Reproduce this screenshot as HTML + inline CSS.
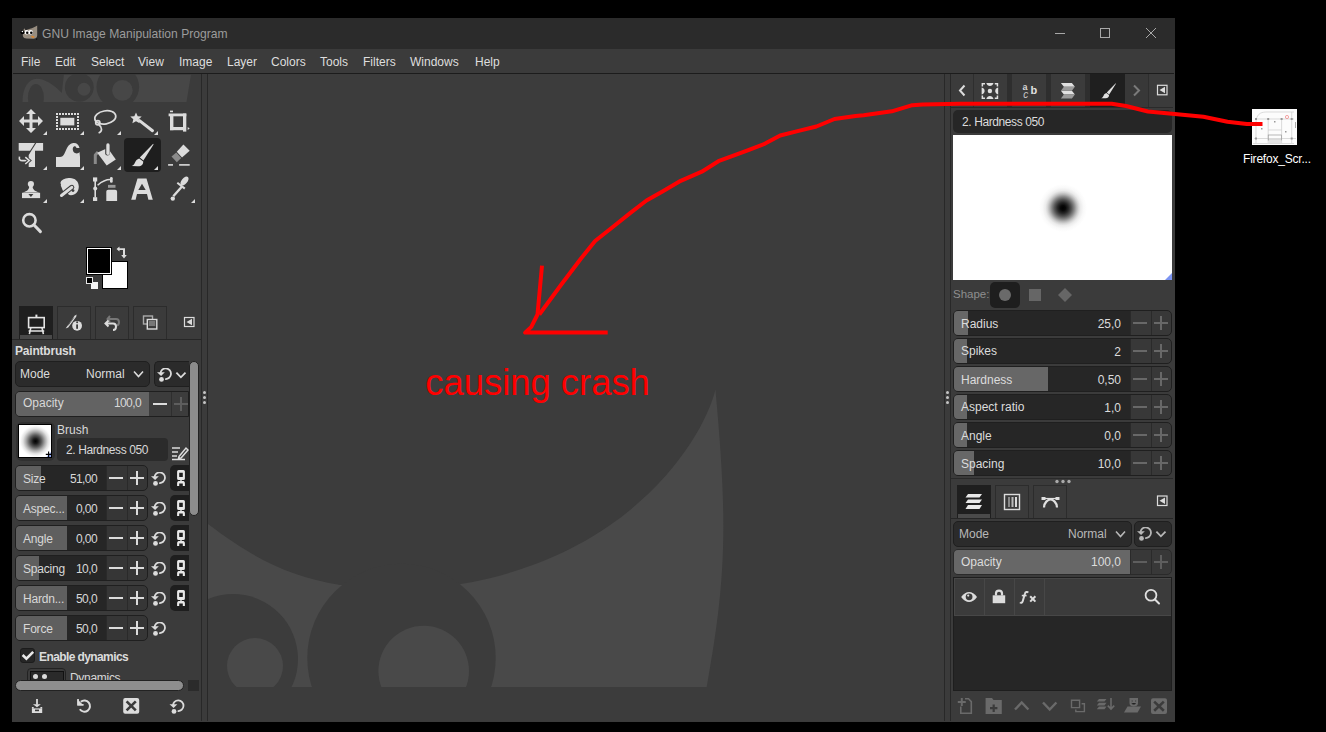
<!DOCTYPE html>
<html><head><meta charset="utf-8">
<style>
html,body{margin:0;padding:0;}
body{width:1326px;height:732px;background:#000;position:relative;overflow:hidden;font-family:"Liberation Sans",sans-serif;}
.a{position:absolute;box-sizing:border-box;}
.t{position:absolute;white-space:nowrap;line-height:1;font-family:"Liberation Sans",sans-serif;}
.m{font-size:12px;color:#dedede;top:56px;}
.lbl{font-size:12px;color:#d8d8d8;}
</style></head><body>
<!-- window base -->
<div class="a" style="left:12px;top:18px;width:1163px;height:704px;background:#3b3b3b;"></div>
<!-- title bar -->
<div class="a" style="left:12px;top:18px;width:1163px;height:31px;background:#2b2b2b;"></div>
<div class="t" style="left:42px;top:28px;font-size:12.1px;color:#9c9c9c;">GNU Image Manipulation Program</div>
<!-- menu bar -->
<div class="a" style="left:12px;top:49px;width:1163px;height:24px;background:#3b3b3b;"></div>

<div class="t m" style="left:21px;">File</div>
<div class="t m" style="left:55px;">Edit</div>
<div class="t m" style="left:91px;">Select</div>
<div class="t m" style="left:138px;">View</div>
<div class="t m" style="left:179px;">Image</div>
<div class="t m" style="left:227px;">Layer</div>
<div class="t m" style="left:271px;">Colors</div>
<div class="t m" style="left:320px;">Tools</div>
<div class="t m" style="left:363px;">Filters</div>
<div class="t m" style="left:410px;">Windows</div>
<div class="t m" style="left:475px;">Help</div>

<!-- separators -->
<div class="a" style="left:201px;top:73px;width:1px;height:648px;background:#282828;"></div>
<div class="a" style="left:207px;top:73px;width:1px;height:648px;background:#282828;"></div>
<div class="a" style="left:944px;top:73px;width:1px;height:648px;background:#282828;"></div>
<div class="a" style="left:950px;top:73px;width:1px;height:648px;background:#282828;"></div>

<!-- canvas -->
<div class="a" style="left:208px;top:73px;width:736px;height:648px;background:#3c3c3c;overflow:hidden;">
<svg width="736" height="648" style="position:absolute;left:0;top:0">
  <path fill="#494949" d="M0.0 451.0 C48.0 487.0 80.0 503.0 132.0 512.0 L251.5 511.3 C427.0 482.0 497.0 362.0 507.4 316.6 C520.0 452.0 518.0 507.0 498.7 614.0 L0.0 614.0 Z"/>
  <g fill="#3c3c3c">
    <circle cx="25" cy="586" r="65"/>
    <circle cx="193.5" cy="585" r="94.2"/>
  </g>
  <g fill="#494949">
    <circle cx="47" cy="593" r="28"/>
    <circle cx="215.7" cy="598" r="45.3"/>
  </g>
  <rect x="0" y="614" width="736" height="40" fill="#3c3c3c"/>
</svg>
</div>


<!-- LEFT DOCK -->
<svg class="a" style="left:12px;top:73px" width="189" height="170" viewBox="0 0 189 170">
  <!-- wilber header -->
  <path fill="#474747" d="M10.5 29 C10.5 14 17 5.8 24.7 5.8 C33 5.8 42 12 49.8 20 L51.9 1.4 L179 1.4 L174.5 29 Z"/>
  <g fill="#3b3b3b">
    <ellipse cx="23.9" cy="25" rx="8" ry="14"/>
    <circle cx="67.3" cy="14.3" r="14.4"/>
    <circle cx="105.8" cy="13.9" r="21.3"/>
  </g>
  <g fill="#474747">
    <circle cx="72" cy="16.3" r="6.45"/>
    <circle cx="110.4" cy="17.4" r="10.3"/>
  </g>
  <rect x="0" y="0" width="189" height="1.4" fill="#3b3b3b"/>
  <rect x="0" y="29" width="189" height="141" fill="#3b3b3b"/>
</svg>
<svg class="a" style="left:12px;top:102px" width="189" height="140" viewBox="0 0 189 140">
  <!-- selected tile -->
  <rect x="112" y="36" width="37" height="34" rx="4" fill="#1e1e1e"/>
  <g fill="#dcdcdc">
    <!-- corner triangles row1 -->
    <path d="M31 33 L35 29 L35 33 Z"/><path d="M68 33 L72 29 L72 33 Z"/><path d="M105 33 L109 29 L109 33 Z"/><path d="M142 33 L146 29 L146 33 Z"/>
    <path d="M31 68 L35 64 L35 68 Z"/><path d="M68 68 L72 64 L72 68 Z"/><path d="M105 68 L109 64 L109 68 Z"/><path d="M142 68 L146 64 L146 68 Z"/>
    <path d="M31 101 L35 97 L35 101 Z"/><path d="M68 101 L72 97 L72 101 Z"/><path d="M179 101 L183 97 L183 101 Z"/>
  </g>
  <!-- move -->
  <g fill="#dcdcdc">
    <path d="M19 7 L24 12 L20.5 12 L20.5 17.5 L26 17.5 L26 14 L31 19 L26 24 L26 20.5 L20.5 20.5 L20.5 26 L24 26 L19 31 L14 26 L17.5 26 L17.5 20.5 L12 20.5 L12 24 L7 19 L12 14 L12 17.5 L17.5 17.5 L17.5 12 L14 12 Z"/>
  </g>
  <!-- rect select -->
  <g fill="#dcdcdc">
    <rect x="48.3" y="15.8" width="14" height="7.6"/>
    <path d="M44 11h2v2h-2zM47 11h2v2h-2zM50 11h2v2h-2zM53 11h2v2h-2zM56 11h2v2h-2zM59 11h2v2h-2zM62 11h2v2h-2zM65 11h2v2h-2z
             M44 26h2v2h-2zM47 26h2v2h-2zM50 26h2v2h-2zM53 26h2v2h-2zM56 26h2v2h-2zM59 26h2v2h-2zM62 26h2v2h-2zM65 26h2v2h-2z
             M44 14h2v2h-2zM44 17h2v2h-2zM44 20h2v2h-2zM44 23h2v2h-2zM65 14h2v2h-2zM65 17h2v2h-2zM65 20h2v2h-2zM65 23h2v2h-2z"/>
  </g>
  <!-- lasso -->
  <g fill="none" stroke="#dcdcdc" stroke-width="1.7">
    <ellipse cx="93.3" cy="15.4" rx="10.6" ry="6.5" transform="rotate(-10 93.3 15.4)"/>
    <circle cx="85.8" cy="20.8" r="2.1"/>
    <path d="M86.8 22.8 C90.3 25 90.6 29.6 86.6 31"/>
  </g>
  <!-- magic wand -->
  <g fill="#dcdcdc">
    <path d="M124 10.5 L125.7 14.2 L129.7 14.6 L126.7 17.3 L127.6 21.2 L124 19.2 L120.4 21.2 L121.3 17.3 L118.3 14.6 L122.3 14.2 Z"/>
  </g>
  <path d="M127.5 18.6 L140.5 28.7" stroke="#dcdcdc" stroke-width="3" stroke-linecap="round"/>
  <!-- crop -->
  <g fill="#dcdcdc">
    <rect x="156.6" y="11.5" width="17.7" height="2.8"/>
    <rect x="171" y="11.5" width="3.3" height="18.1"/>
    <rect x="158" y="14" width="3.4" height="14.2"/>
    <rect x="158" y="25" width="13" height="3.2"/>
    <rect x="158" y="8.6" width="3" height="1.6"/>
    <path d="M175.7 24.9 L177.7 26.5 L175.7 28 Z"/>
  </g>
  <!-- unified transform -->
  <path fill="#dcdcdc" d="M6.7 41.1 H31.1 V48.8 H23 V65 H16.7 V52.6 L18.6 48.8 H6.7 Z"/>
  <path d="M23.8 40.8 L16.2 52.8" stroke="#3b3b3b" stroke-width="1.1"/>
  <path d="M7.5 54.6 C6.8 57.5 8 58.6 10.5 58.6 L15.5 58.6" fill="none" stroke="#3b3b3b" stroke-width="3.6"/>
  <path d="M7.5 54.6 C6.8 57.5 8 58.6 10.5 58.6 L15.5 58.6" fill="none" stroke="#dcdcdc" stroke-width="1.6"/>
  <path d="M13.3 55.2 L17.3 58.6 L13.3 62" fill="none" stroke="#3b3b3b" stroke-width="3.4"/>
  <path d="M13.3 55.2 L17.3 58.6 L13.3 62" fill="none" stroke="#dcdcdc" stroke-width="1.6"/>
  <!-- warp -->
  <path fill="#dcdcdc" d="M44 55 L48 55 C52 55 53 50 55 46 C57 42 60 41 62 41 C65 41 67 43 67.5 46 L64.5 46 C64 44.5 63 44 62 44.5 C60 45.5 60.5 50 63 51 C65 52 67 51 67.5 50 L68 55 L68 65 L44 65 Z"/>
  <!-- bucket -->
  <path d="M83.3 62 L83.3 53 L86 50" fill="none" stroke="#8a8a8a" stroke-width="3" stroke-linejoin="round"/>
  <g fill="#dcdcdc">
    <path d="M85.2 50.7 L95.7 46 L103.8 57.4 L94.7 63.6 Z"/>
  </g>
  <rect x="93.2" y="40.6" width="4.6" height="13" rx="2.3" fill="#3b3b3b"/>
  <rect x="94.3" y="41.3" width="3.3" height="11.6" rx="1.6" fill="#dcdcdc"/>
  <!-- paintbrush -->
  <g fill="#dcdcdc">
    <path d="M141.2 41.8 L127.8 55.6 L131.4 58.4 L141.5 42.4 Z"/>
    <path d="M127.2 56.4 L131.2 59.4 C131.4 62.4 129.4 64.4 125.6 64.2 L119.6 64 C121.4 63.4 122.2 62.4 123 60.5 C123.8 58.6 125 57 127.2 56.4 Z"/>
  </g>
  <!-- eraser -->
  <g>
    <path d="M171.4 42.5 L177.7 48.8 L170 55.4 L164.8 49.7 Z" fill="#dcdcdc"/>
    <path d="M164.3 50.6 L169.2 55.9 L164.8 60.2 L159.5 54.5 Z" fill="#8a8a8a"/>
    <rect x="156.1" y="62.1" width="4.9" height="1.6" fill="#dcdcdc"/>
    <rect x="167.1" y="62.1" width="10.6" height="1.6" fill="#dcdcdc"/>
  </g>
  <!-- clone -->
  <g fill="#dcdcdc">
    <circle cx="18.9" cy="82" r="3.1"/>
    <path d="M17.2 84 C17.2 87.2 15.8 89.2 10.5 90.4 L27.6 90.4 C22.2 89.2 20.6 87.2 20.6 84 Z"/>
    <rect x="10" y="90.8" width="18.1" height="5.3"/>
  </g>
  <path d="M16.4 92 L21.4 92 L18.9 95.1 Z" fill="#3b3b3b"/>
  <!-- smudge -->
  <path fill="#dcdcdc" d="M48.6 80.2 C50 77 54 76 58 76 C63 76 66.8 79.5 66.8 84.5 C66.8 89.5 63.5 93.2 59 93.2 C56.6 93.2 55.4 91.8 55.8 90.2 L51.5 89.5 C50.4 88.2 50.2 86.8 49.6 85.5 C49 84.2 48.5 83.3 49 82.3 C48.4 81.6 48.3 80.9 48.6 80.2 Z"/>
  <path d="M49.5 93.5 L59.8 85.3" stroke="#3b3b3b" stroke-width="5" stroke-linecap="round"/>
  <path d="M49.5 93.5 L59.8 85.3" stroke="#dcdcdc" stroke-width="3" stroke-linecap="round"/>
  <circle cx="61" cy="88.6" r="1.4" fill="#3b3b3b"/>
  <!-- paths -->
  <g fill="#dcdcdc">
    <rect x="81" y="75.4" width="4.2" height="4.1"/>
    <rect x="81" y="95.2" width="4.2" height="3.8"/>
    <circle cx="83.2" cy="86.6" r="2"/>
    <rect x="82.4" y="79" width="1.6" height="16.5"/>
    <rect x="98" y="75" width="2.7" height="5.8" rx="1.3"/>
    <path d="M94.3 99 L94.3 89.8 C94.3 88.5 95 87.8 96.3 87.8 L103.1 87.8 C104.4 87.8 105.1 88.5 105.1 89.8 L105.1 99 Z"/>
  </g>
  <path d="M85.6 83.3 C89 80.3 93 77.6 98.3 77.6" fill="none" stroke="#dcdcdc" stroke-width="1.5"/>
  <rect x="96" y="82.9" width="7.5" height="2.9" fill="#9a9a9a"/>
  <!-- text A -->
  <path fill="#dcdcdc" fill-rule="evenodd" d="M125.5 76.6 L134.5 76.6 L140.8 97.8 L136.4 97.8 L135 92 L125 92 L123.6 97.8 L119.2 97.8 Z M130 81.8 L126.3 87.9 L133.7 87.9 Z"/>
  <!-- color picker -->
  <ellipse cx="172.5" cy="79" rx="2.9" ry="5.3" transform="rotate(40 172.5 79)" fill="#dcdcdc"/>
  <path d="M165.3 80.8 L172.8 86.6" stroke="#dcdcdc" stroke-width="2"/>
  <path d="M170 84.5 L161.3 94.2" stroke="#dcdcdc" stroke-width="2.4"/>
  <circle cx="160.8" cy="96.6" r="2.2" fill="#dcdcdc"/>
  <!-- zoom -->
  <g fill="none" stroke="#dcdcdc">
    <circle cx="17.4" cy="118.3" r="6.2" stroke-width="2.6"/>
    <path d="M21.8 122.8 L28.4 129.6" stroke-width="3" stroke-linecap="round"/>
  </g>
</svg>
<!-- FG/BG colors -->
<div class="a" style="left:102px;top:261px;width:26px;height:28px;background:#fff;border:1px solid #000;"></div>
<div class="a" style="left:86px;top:247px;width:26px;height:28px;background:#000;border:1px solid #000;box-shadow:inset 0 0 0 1px #fff;"></div>
<div class="a" style="left:88px;top:249px;width:22px;height:24px;background:#000;"></div>
<div class="a" style="left:91px;top:282px;width:7px;height:7px;background:#f4f4f4;"></div>
<div class="a" style="left:86px;top:277px;width:7px;height:7px;background:#000;border:1px solid #e8e8e8;"></div>
<svg class="a" style="left:115px;top:246px" width="14" height="14" viewBox="0 0 14 14">
  <path d="M1.5 3 L4.5 0.5 L4.5 2.2 L10 2.2 L10 9 L11.8 9 L9 12.5 L6.2 9 L8 9 L8 4 L4.5 4 L4.5 5.6 Z" fill="#dcdcdc"/>
</svg>
<!-- dock tabs -->
<div class="a" style="left:12px;top:339px;width:189px;height:1px;background:#262626;"></div>
<div class="a" style="left:19px;top:306px;width:34px;height:33px;background:#1f1f1f;"></div>
<div class="a" style="left:20px;top:335px;width:32px;height:4px;background:#4a4a4a;"></div>
<div class="a" style="left:57px;top:306px;width:34px;height:33px;border:1px solid #2c2c2c;border-bottom:none;"></div>
<div class="a" style="left:95px;top:306px;width:34px;height:33px;border:1px solid #2c2c2c;border-bottom:none;"></div>
<div class="a" style="left:133px;top:306px;width:34px;height:33px;border:1px solid #2c2c2c;border-bottom:none;"></div>
<svg class="a" style="left:12px;top:306px" width="189" height="34" viewBox="0 0 189 34">
  <!-- easel -->
  <g fill="none" stroke="#e4e4e4" stroke-width="1.6">
    <rect x="16.6" y="11.6" width="15.6" height="10"/>
    <path d="M16.6 25 L32.2 25 M18.8 21.6 L17.4 28.2 M30 21.6 L31.4 28.2"/>
  </g>
  <rect x="23.4" y="8.6" width="2" height="3" fill="#e4e4e4"/>
  <!-- brush+info -->
  <path d="M53.6 22.6 L62.6 9.8 L64.6 8.6 L64.2 10.8 L56.2 21.4 Z" fill="#dcdcdc"/>
  <path d="M56 19.5 L61.8 11.5" stroke="#3b3b3b" stroke-width="0.7"/>
  <circle cx="65.1" cy="19.8" r="5.6" fill="#3b3b3b"/>
  <circle cx="65.1" cy="19.8" r="4.9" fill="#dcdcdc"/>
  <rect x="64.2" y="18.4" width="1.8" height="4.4" fill="#3b3b3b"/>
  <circle cx="65.1" cy="16.3" r="1" fill="#3b3b3b"/>
  <!-- undo history -->
  <path d="M104 19.5 C108 19.5 108 13 104 13 L97 13" fill="none" stroke="#777" stroke-width="2"/>
  <path d="M98 10 L95.5 13 L98 16" fill="none" stroke="#777" stroke-width="2"/>
  <path d="M101 17.5 L94 17.5 M96.5 14.5 L93.5 17.5 L96.5 20.5 M94 17.5 L101 17.5 C105 17.5 105 24 101 24" fill="none" stroke="#dcdcdc" stroke-width="2"/>
  <!-- images -->
  <rect x="131.5" y="10" width="9" height="8" fill="none" stroke="#aaa" stroke-width="1.4"/>
  <rect x="135.3" y="13.5" width="9.5" height="9.5" fill="#3b3b3b" stroke="#dcdcdc" stroke-width="1.4"/>
  <rect x="136.8" y="15" width="6.5" height="5" fill="#777"/>
  <!-- collapse -->
  <rect x="172.5" y="11.5" width="9.5" height="9" fill="none" stroke="#dcdcdc" stroke-width="1.2"/>
  <path d="M174.5 16 L180 12.8 L180 19.2 Z" fill="#dcdcdc"/>
</svg>
<div class="t" style="left:15px;top:345px;font-size:12px;font-weight:bold;color:#dcdcdc;letter-spacing:-0.2px;">Paintbrush</div>


<!-- tool options controls -->
<div class="a" style="left:15px;top:361px;width:135px;height:26px;background:#2b2b2b;border:1px solid #1f1f1f;border-radius:5px;"></div>
<div class="t lbl" style="left:20px;top:368px;color:#dcdcdc;">Mode</div>
<div class="t lbl" style="left:86px;top:368px;color:#dcdcdc;">Normal</div>
<svg class="a" style="left:133px;top:370px" width="12" height="9"><path d="M1 1.5 L5.5 6.5 L10 1.5" fill="none" stroke="#dcdcdc" stroke-width="1.6"/></svg>
<div class="a" style="left:154px;top:361px;width:35px;height:26px;background:#2b2b2b;border:1px solid #1f1f1f;border-right:none;border-radius:5px 0 0 5px;"></div>
<svg class="a" style="left:157px;top:368px" width="32" height="16" viewBox="0 0 32 16">
  <path d="M3.4 5.7 A5.3 5.3 0 1 1 8.2 11" fill="none" stroke="#dcdcdc" stroke-width="1.8"/>
  <path d="M0 4.3 L7.8 4.3 L4.1 7.9 Z" fill="#dcdcdc"/>
  <circle cx="4.5" cy="11.4" r="2.4" fill="#dcdcdc"/>
  <path d="M19.4 4.6 L23.9 9.3 L28.5 4.6" fill="none" stroke="#dcdcdc" stroke-width="1.8"/>
</svg>
<!-- opacity -->
<div class="a" style="left:15px;top:391px;width:174px;height:26px;background:#3c3c3c;border:1px solid #1f1f1f;border-radius:5px 0 0 5px;overflow:hidden;">
  <div class="a" style="left:0;top:0;width:133px;height:24px;background:#636363;"></div>
  <div class="a" style="left:155px;top:0;width:1px;height:24px;background:#2e2e2e;"></div>
</div>
<div class="t lbl" style="left:23px;top:397px;">Opacity</div>
<div class="t lbl" style="left:101px;width:40px;text-align:right;top:397px;letter-spacing:-0.6px;">100,0</div>
<div class="a" style="left:153px;top:403px;width:14px;height:2px;background:#dcdcdc;"></div>
<div class="a" style="left:174px;top:403px;width:14px;height:2px;background:#5e5e5e;"></div>
<div class="a" style="left:180px;top:397px;width:2px;height:14px;background:#5e5e5e;"></div>
<!-- brush -->
<div class="a" style="left:15.5px;top:421.5px;width:39px;height:39px;background:#303030;border-radius:6px;"></div>
<div class="a" style="left:18px;top:424px;width:34px;height:34px;border:1px solid #000;background:radial-gradient(circle at 16.5px 16.2px, #000 0px, #1a1a1a 2.5px, #5a5a5a 6px, #aaaaaa 9.5px, #e2e2e2 12.5px, #fafafa 15px, #fff 16px);"></div>
<svg class="a" style="left:45px;top:451px" width="7" height="7"><path d="M1.5 6 L6 1 L6 6 Z" fill="#8fa6f0"/><path d="M3.6 0.6 V6.4 M0.8 3.4 H6.2" stroke="#000" stroke-width="1.1"/></svg>
<div class="t lbl" style="left:57px;top:424px;">Brush</div>
<div class="a" style="left:57px;top:438px;width:111px;height:23px;background:#2b2b2b;border-radius:4px;"></div>
<div class="t lbl" style="left:66px;top:444px;letter-spacing:-0.4px;">2. Hardness 050</div>
<svg class="a" style="left:171px;top:444px" width="18" height="17" viewBox="0 0 18 17">
  <path d="M1 4 H9 M1 8 H7 M1 12 H6 M1 15.5 H14" stroke="#dcdcdc" stroke-width="1.6"/>
  <path d="M8 12.5 L15 4 L17 6 L10 14 L7.5 14.5 Z" fill="none" stroke="#dcdcdc" stroke-width="1.5"/>
</svg>
<!-- rows left -->
<div class="a" style="left:15px;top:465px;width:133px;height:26px;background:#363636;border:1px solid #1f1f1f;border-radius:5px;overflow:hidden;">
  <div class="a" style="left:0;top:0;width:90px;height:24px;background:#262626;"></div>
  <div class="a" style="left:0;top:0;width:25px;height:24px;background:#5f5f5f;"></div>
  <div class="a" style="left:90px;top:0;width:1px;height:24px;background:#2a2a2a;"></div>
  <div class="a" style="left:111px;top:0;width:1px;height:24px;background:#2a2a2a;"></div>
</div>
<div class="t lbl" style="left:23px;top:473px;letter-spacing:-0.2px;">Size</div>
<div class="t lbl" style="left:57px;width:40px;text-align:right;top:473px;letter-spacing:-0.6px;">51,00</div>
<div class="a" style="left:109px;top:477px;width:14px;height:2px;background:#dcdcdc;"></div>
<div class="a" style="left:130px;top:477px;width:14px;height:2px;background:#dcdcdc;"></div>
<div class="a" style="left:136px;top:471px;width:2px;height:14px;background:#dcdcdc;"></div>
<svg class="a" style="left:151px;top:472px" width="16" height="15" viewBox="0 0 16 15">
  <path d="M3.4 5.7 A5.3 5.3 0 1 1 8.2 11" fill="none" stroke="#dcdcdc" stroke-width="1.8"/>
  <path d="M0 4.3 L7.8 4.3 L4.1 7.9 Z" fill="#dcdcdc"/>
  <circle cx="4.5" cy="11.4" r="2.4" fill="#dcdcdc"/>
</svg>
<div class="a" style="left:170px;top:465px;width:19px;height:26px;background:#1e1e1e;border-radius:5px 0 0 5px;"></div>
<svg class="a" style="left:176px;top:470px" width="10" height="17" viewBox="0 0 10 17">
  <path fill-rule="evenodd" fill="#e8e8e8" d="M2.6 0 H7.4 Q8.9 0 8.9 1.5 V8.4 Q8.9 9.9 7.4 9.9 H2.6 Q1.1 9.9 1.1 8.4 V1.5 Q1.1 0 2.6 0 Z M3.2 2.7 V6.9 H6.8 V2.7 Z"/>
  <rect x="4.3" y="9.6" width="1.4" height="1.6" fill="#e8e8e8"/>
  <path fill="#e8e8e8" d="M1.1 16 L1.1 13.5 C1.1 11.6 2 11 3.5 11 L6.5 11 C8 11 8.9 11.6 8.9 13.5 L8.9 16 L6.8 16 L6.8 13.6 L3.2 13.6 L3.2 16 Z"/>
</svg>
<div class="a" style="left:15px;top:495px;width:133px;height:26px;background:#363636;border:1px solid #1f1f1f;border-radius:5px;overflow:hidden;">
  <div class="a" style="left:0;top:0;width:90px;height:24px;background:#262626;"></div>
  <div class="a" style="left:0;top:0;width:51px;height:24px;background:#5f5f5f;"></div>
  <div class="a" style="left:90px;top:0;width:1px;height:24px;background:#2a2a2a;"></div>
  <div class="a" style="left:111px;top:0;width:1px;height:24px;background:#2a2a2a;"></div>
</div>
<div class="t lbl" style="left:23px;top:503px;letter-spacing:-0.2px;">Aspec...</div>
<div class="t lbl" style="left:57px;width:40px;text-align:right;top:503px;letter-spacing:-0.6px;">0,00</div>
<div class="a" style="left:109px;top:507px;width:14px;height:2px;background:#dcdcdc;"></div>
<div class="a" style="left:130px;top:507px;width:14px;height:2px;background:#dcdcdc;"></div>
<div class="a" style="left:136px;top:501px;width:2px;height:14px;background:#dcdcdc;"></div>
<svg class="a" style="left:151px;top:502px" width="16" height="15" viewBox="0 0 16 15">
  <path d="M3.4 5.7 A5.3 5.3 0 1 1 8.2 11" fill="none" stroke="#dcdcdc" stroke-width="1.8"/>
  <path d="M0 4.3 L7.8 4.3 L4.1 7.9 Z" fill="#dcdcdc"/>
  <circle cx="4.5" cy="11.4" r="2.4" fill="#dcdcdc"/>
</svg>
<div class="a" style="left:170px;top:495px;width:19px;height:26px;background:#1e1e1e;border-radius:5px 0 0 5px;"></div>
<svg class="a" style="left:176px;top:500px" width="10" height="17" viewBox="0 0 10 17">
  <path fill-rule="evenodd" fill="#e8e8e8" d="M2.6 0 H7.4 Q8.9 0 8.9 1.5 V8.4 Q8.9 9.9 7.4 9.9 H2.6 Q1.1 9.9 1.1 8.4 V1.5 Q1.1 0 2.6 0 Z M3.2 2.7 V6.9 H6.8 V2.7 Z"/>
  <rect x="4.3" y="9.6" width="1.4" height="1.6" fill="#e8e8e8"/>
  <path fill="#e8e8e8" d="M1.1 16 L1.1 13.5 C1.1 11.6 2 11 3.5 11 L6.5 11 C8 11 8.9 11.6 8.9 13.5 L8.9 16 L6.8 16 L6.8 13.6 L3.2 13.6 L3.2 16 Z"/>
</svg>
<div class="a" style="left:15px;top:525px;width:133px;height:26px;background:#363636;border:1px solid #1f1f1f;border-radius:5px;overflow:hidden;">
  <div class="a" style="left:0;top:0;width:90px;height:24px;background:#262626;"></div>
  <div class="a" style="left:0;top:0;width:51px;height:24px;background:#5f5f5f;"></div>
  <div class="a" style="left:90px;top:0;width:1px;height:24px;background:#2a2a2a;"></div>
  <div class="a" style="left:111px;top:0;width:1px;height:24px;background:#2a2a2a;"></div>
</div>
<div class="t lbl" style="left:23px;top:533px;letter-spacing:-0.2px;">Angle</div>
<div class="t lbl" style="left:57px;width:40px;text-align:right;top:533px;letter-spacing:-0.6px;">0,00</div>
<div class="a" style="left:109px;top:537px;width:14px;height:2px;background:#dcdcdc;"></div>
<div class="a" style="left:130px;top:537px;width:14px;height:2px;background:#dcdcdc;"></div>
<div class="a" style="left:136px;top:531px;width:2px;height:14px;background:#dcdcdc;"></div>
<svg class="a" style="left:151px;top:532px" width="16" height="15" viewBox="0 0 16 15">
  <path d="M3.4 5.7 A5.3 5.3 0 1 1 8.2 11" fill="none" stroke="#dcdcdc" stroke-width="1.8"/>
  <path d="M0 4.3 L7.8 4.3 L4.1 7.9 Z" fill="#dcdcdc"/>
  <circle cx="4.5" cy="11.4" r="2.4" fill="#dcdcdc"/>
</svg>
<div class="a" style="left:170px;top:525px;width:19px;height:26px;background:#1e1e1e;border-radius:5px 0 0 5px;"></div>
<svg class="a" style="left:176px;top:530px" width="10" height="17" viewBox="0 0 10 17">
  <path fill-rule="evenodd" fill="#e8e8e8" d="M2.6 0 H7.4 Q8.9 0 8.9 1.5 V8.4 Q8.9 9.9 7.4 9.9 H2.6 Q1.1 9.9 1.1 8.4 V1.5 Q1.1 0 2.6 0 Z M3.2 2.7 V6.9 H6.8 V2.7 Z"/>
  <rect x="4.3" y="9.6" width="1.4" height="1.6" fill="#e8e8e8"/>
  <path fill="#e8e8e8" d="M1.1 16 L1.1 13.5 C1.1 11.6 2 11 3.5 11 L6.5 11 C8 11 8.9 11.6 8.9 13.5 L8.9 16 L6.8 16 L6.8 13.6 L3.2 13.6 L3.2 16 Z"/>
</svg>
<div class="a" style="left:15px;top:555px;width:133px;height:26px;background:#363636;border:1px solid #1f1f1f;border-radius:5px;overflow:hidden;">
  <div class="a" style="left:0;top:0;width:90px;height:24px;background:#262626;"></div>
  <div class="a" style="left:0;top:0;width:23px;height:24px;background:#5f5f5f;"></div>
  <div class="a" style="left:90px;top:0;width:1px;height:24px;background:#2a2a2a;"></div>
  <div class="a" style="left:111px;top:0;width:1px;height:24px;background:#2a2a2a;"></div>
</div>
<div class="t lbl" style="left:23px;top:563px;letter-spacing:-0.2px;">Spacing</div>
<div class="t lbl" style="left:57px;width:40px;text-align:right;top:563px;letter-spacing:-0.6px;">10,0</div>
<div class="a" style="left:109px;top:567px;width:14px;height:2px;background:#dcdcdc;"></div>
<div class="a" style="left:130px;top:567px;width:14px;height:2px;background:#dcdcdc;"></div>
<div class="a" style="left:136px;top:561px;width:2px;height:14px;background:#dcdcdc;"></div>
<svg class="a" style="left:151px;top:562px" width="16" height="15" viewBox="0 0 16 15">
  <path d="M3.4 5.7 A5.3 5.3 0 1 1 8.2 11" fill="none" stroke="#dcdcdc" stroke-width="1.8"/>
  <path d="M0 4.3 L7.8 4.3 L4.1 7.9 Z" fill="#dcdcdc"/>
  <circle cx="4.5" cy="11.4" r="2.4" fill="#dcdcdc"/>
</svg>
<div class="a" style="left:170px;top:555px;width:19px;height:26px;background:#1e1e1e;border-radius:5px 0 0 5px;"></div>
<svg class="a" style="left:176px;top:560px" width="10" height="17" viewBox="0 0 10 17">
  <path fill-rule="evenodd" fill="#e8e8e8" d="M2.6 0 H7.4 Q8.9 0 8.9 1.5 V8.4 Q8.9 9.9 7.4 9.9 H2.6 Q1.1 9.9 1.1 8.4 V1.5 Q1.1 0 2.6 0 Z M3.2 2.7 V6.9 H6.8 V2.7 Z"/>
  <rect x="4.3" y="9.6" width="1.4" height="1.6" fill="#e8e8e8"/>
  <path fill="#e8e8e8" d="M1.1 16 L1.1 13.5 C1.1 11.6 2 11 3.5 11 L6.5 11 C8 11 8.9 11.6 8.9 13.5 L8.9 16 L6.8 16 L6.8 13.6 L3.2 13.6 L3.2 16 Z"/>
</svg>
<div class="a" style="left:15px;top:585px;width:133px;height:26px;background:#363636;border:1px solid #1f1f1f;border-radius:5px;overflow:hidden;">
  <div class="a" style="left:0;top:0;width:90px;height:24px;background:#262626;"></div>
  <div class="a" style="left:0;top:0;width:51px;height:24px;background:#5f5f5f;"></div>
  <div class="a" style="left:90px;top:0;width:1px;height:24px;background:#2a2a2a;"></div>
  <div class="a" style="left:111px;top:0;width:1px;height:24px;background:#2a2a2a;"></div>
</div>
<div class="t lbl" style="left:23px;top:593px;letter-spacing:-0.2px;">Hardn...</div>
<div class="t lbl" style="left:57px;width:40px;text-align:right;top:593px;letter-spacing:-0.6px;">50,0</div>
<div class="a" style="left:109px;top:597px;width:14px;height:2px;background:#dcdcdc;"></div>
<div class="a" style="left:130px;top:597px;width:14px;height:2px;background:#dcdcdc;"></div>
<div class="a" style="left:136px;top:591px;width:2px;height:14px;background:#dcdcdc;"></div>
<svg class="a" style="left:151px;top:592px" width="16" height="15" viewBox="0 0 16 15">
  <path d="M3.4 5.7 A5.3 5.3 0 1 1 8.2 11" fill="none" stroke="#dcdcdc" stroke-width="1.8"/>
  <path d="M0 4.3 L7.8 4.3 L4.1 7.9 Z" fill="#dcdcdc"/>
  <circle cx="4.5" cy="11.4" r="2.4" fill="#dcdcdc"/>
</svg>
<div class="a" style="left:170px;top:585px;width:19px;height:26px;background:#1e1e1e;border-radius:5px 0 0 5px;"></div>
<svg class="a" style="left:176px;top:590px" width="10" height="17" viewBox="0 0 10 17">
  <path fill-rule="evenodd" fill="#e8e8e8" d="M2.6 0 H7.4 Q8.9 0 8.9 1.5 V8.4 Q8.9 9.9 7.4 9.9 H2.6 Q1.1 9.9 1.1 8.4 V1.5 Q1.1 0 2.6 0 Z M3.2 2.7 V6.9 H6.8 V2.7 Z"/>
  <rect x="4.3" y="9.6" width="1.4" height="1.6" fill="#e8e8e8"/>
  <path fill="#e8e8e8" d="M1.1 16 L1.1 13.5 C1.1 11.6 2 11 3.5 11 L6.5 11 C8 11 8.9 11.6 8.9 13.5 L8.9 16 L6.8 16 L6.8 13.6 L3.2 13.6 L3.2 16 Z"/>
</svg>
<div class="a" style="left:15px;top:615px;width:133px;height:26px;background:#363636;border:1px solid #1f1f1f;border-radius:5px;overflow:hidden;">
  <div class="a" style="left:0;top:0;width:90px;height:24px;background:#262626;"></div>
  <div class="a" style="left:0;top:0;width:51px;height:24px;background:#5f5f5f;"></div>
  <div class="a" style="left:90px;top:0;width:1px;height:24px;background:#2a2a2a;"></div>
  <div class="a" style="left:111px;top:0;width:1px;height:24px;background:#2a2a2a;"></div>
</div>
<div class="t lbl" style="left:23px;top:623px;letter-spacing:-0.2px;">Force</div>
<div class="t lbl" style="left:57px;width:40px;text-align:right;top:623px;letter-spacing:-0.6px;">50,0</div>
<div class="a" style="left:109px;top:627px;width:14px;height:2px;background:#dcdcdc;"></div>
<div class="a" style="left:130px;top:627px;width:14px;height:2px;background:#dcdcdc;"></div>
<div class="a" style="left:136px;top:621px;width:2px;height:14px;background:#dcdcdc;"></div>
<svg class="a" style="left:151px;top:622px" width="16" height="15" viewBox="0 0 16 15">
  <path d="M3.4 5.7 A5.3 5.3 0 1 1 8.2 11" fill="none" stroke="#dcdcdc" stroke-width="1.8"/>
  <path d="M0 4.3 L7.8 4.3 L4.1 7.9 Z" fill="#dcdcdc"/>
  <circle cx="4.5" cy="11.4" r="2.4" fill="#dcdcdc"/>
</svg>
<!-- enable dynamics -->
<div class="a" style="left:20px;top:648px;width:15px;height:15px;background:#262626;border:1px solid #1c1c1c;border-radius:3px;"></div>
<svg class="a" style="left:20px;top:648px" width="15" height="15"><path d="M2.6 7 L6.4 10.6 L13.2 3.8" fill="none" stroke="#e8e8e8" stroke-width="2.6"/></svg>
<div class="t" style="left:39px;top:651px;font-size:12px;font-weight:bold;color:#dcdcdc;letter-spacing:-0.6px;">Enable dynamics</div>
<div class="a" style="left:12px;top:668px;width:178px;height:12px;overflow:hidden;">
  <div class="a" style="left:15px;top:0px;width:39px;height:20px;border:1px solid #222;border-radius:4px;background:#3b3b3b;"></div>
  <div class="a" style="left:18px;top:3px;width:34px;height:16px;border:1px solid #111;background:#2a2a2a;"></div>
  <div class="a" style="left:21px;top:6px;width:5.4px;height:5.4px;border-radius:50%;background:#dcdcdc;"></div>
  <div class="a" style="left:29.5px;top:6px;width:5.4px;height:5.4px;border-radius:50%;background:#dcdcdc;"></div>
  <div class="t lbl" style="left:58px;top:4px;letter-spacing:-0.3px;">Dynamics</div>
</div>
<!-- scrollbars -->
<div class="a" style="left:189px;top:361px;width:10px;height:155px;background:#8c8c8c;border:1px solid #222;border-radius:5px;"></div>
<div class="a" style="left:15px;top:680px;width:169px;height:11px;background:#8e8e8e;border:1px solid #222;border-radius:5.5px;"></div>
<div class="a" style="left:188px;top:680px;width:11px;height:11px;background:#2b2b2b;"></div>
<!-- bottom buttons -->
<svg class="a" style="left:12px;top:696px" width="189" height="22" viewBox="0 0 189 22">
  <g fill="#dcdcdc">
    <rect x="24.1" y="3" width="1.8" height="5.6"/>
    <path d="M20.9 8.3 L28.8 8.3 L25 11.3 Z"/>
    <rect x="19.9" y="12.4" width="10.3" height="4.6"/>
    <rect x="19.9" y="11" width="1.8" height="1.6"/>
    <rect x="28.4" y="11" width="1.8" height="1.6"/>
  </g>
  <rect x="23" y="13.6" width="4" height="1.6" fill="#3b3b3b"/>
  <path d="M68.8 5.8 A5.6 5.6 0 1 1 67.8 13.3" fill="none" stroke="#dcdcdc" stroke-width="2"/>
  <path d="M65.3 3 L66.9 3 L66.9 8 L71.6 8 L71.6 9.6 L65.3 9.6 Z" fill="#dcdcdc"/>
  <path d="M65.3 3 L65.3 9.6 L71.6 9.6 Z" fill="#dcdcdc"/>
  <rect x="111.2" y="1.9" width="16" height="15.9" rx="2" fill="#dcdcdc"/>
  <path d="M114.6 5.3 L123.8 14.4 M123.8 5.3 L114.6 14.4" stroke="#3b3b3b" stroke-width="2.6"/>
  <path d="M160.9 9.7 A5.3 5.3 0 1 1 165.7 15" fill="none" stroke="#dcdcdc" stroke-width="1.8"/>
  <path d="M157.5 8.3 L165.3 8.3 L161.6 11.9 Z" fill="#dcdcdc"/>
  <circle cx="162" cy="15.4" r="2.4" fill="#dcdcdc"/>
</svg>

<!-- RIGHT DOCK -->
<div class="a" style="left:951px;top:73px;width:224px;height:649px;background:#3b3b3b;"></div>

<!-- tab bar -->
<div class="a" style="left:951px;top:74px;width:222px;height:34px;background:#2e2e2e;"></div>
<div class="a" style="left:951px;top:74px;width:22px;height:33px;background:#3b3b3b;"></div>
<div class="a" style="left:974px;top:74px;width:33px;height:33px;background:#3b3b3b;"></div>
<div class="a" style="left:1012px;top:74px;width:34px;height:33px;background:#3b3b3b;"></div>
<div class="a" style="left:1051px;top:74px;width:34px;height:33px;background:#3b3b3b;"></div>
<div class="a" style="left:1090px;top:74px;width:35px;height:33px;background:#1f1f1f;"></div>
<div class="a" style="left:1125px;top:74px;width:23px;height:33px;background:#383838;"></div>
<div class="a" style="left:1149px;top:74px;width:24px;height:33px;background:#3b3b3b;"></div>
<div class="a" style="left:951px;top:107px;width:222px;height:1px;background:#2a2a2a;"></div>
<svg class="a" style="left:951px;top:74px" width="222" height="34" viewBox="0 0 222 34">
  <path d="M13.5 11.5 L9 16.5 L13.5 21.5" fill="none" stroke="#dcdcdc" stroke-width="2"/>
  <!-- grid icon -->
  <g fill="#e0e0e0">
    <path d="M30.6 9 H34 V10.5 H32.1 V12.4 H30.6 Z"/>
    <path d="M47.2 9 H43.8 V10.5 H45.7 V12.4 H47.2 Z"/>
    <path d="M30.6 25 H34 V23.5 H32.1 V21.6 H30.6 Z"/>
    <path d="M47.2 25 H43.8 V23.5 H45.7 V21.6 H47.2 Z"/>
    <path d="M35.3 9 H42.5 C42 11 40.5 12 38.9 12 C37.3 12 35.8 11 35.3 9 Z"/>
    <path d="M35.3 25 H42.5 C42 23 40.5 22 38.9 22 C37.3 22 35.8 23 35.3 25 Z"/>
    <path d="M30.6 13.6 V20.4 C32.6 20 33.6 18.5 33.6 17 C33.6 15.5 32.6 14 30.6 13.6 Z"/>
    <path d="M47.2 13.6 V20.4 C45.2 20 44.2 18.5 44.2 17 C44.2 15.5 45.2 14 47.2 13.6 Z"/>
    <circle cx="38.9" cy="17" r="2.2"/>
  </g>
  <!-- abc -->
  <text x="71.4" y="16.4" font-family="Liberation Sans" font-weight="bold" font-size="9" fill="#d8d8d8">a</text>
  <text x="79.6" y="20.4" font-family="Liberation Sans" font-weight="bold" font-size="11" fill="#e0e0e0">b</text>
  <text x="72.2" y="24" font-family="Liberation Sans" font-style="italic" font-size="10" fill="#c8c8c8">c</text>
  <!-- layers stack icon -->
  <path d="M109.9 8.9 L120.9 8.9 L123.9 12.8 L112.9 12.8 Z M109.9 16.7 L120.9 16.7 L123.9 20.6 L112.9 20.6 Z" fill="#e0e0e0"/>
  <path d="M112.9 12.8 L123.9 12.8 L120.9 16.7 L109.9 16.7 Z M112.9 20.6 L123.9 20.6 L120.9 24.5 L109.9 24.5 Z" fill="#9a9a9a"/>
  <!-- brush (active) -->
  <g transform="translate(70.13 -18.74) scale(0.67)" fill="#e0e0e0">
    <path d="M141.2 41.8 L127.8 55.6 L131.4 58.4 L141.5 42.4 Z"/>
    <path d="M127.2 56.4 L131.2 59.4 C131.4 62.4 129.4 64.4 125.6 64.2 L119.6 64 C121.4 63.4 122.2 62.4 123 60.5 C123.8 58.6 125 57 127.2 56.4 Z"/>
  </g>
  <!-- > -->
  <path d="M183 11.5 L188 16.5 L183 21.5" fill="none" stroke="#7a7a7a" stroke-width="2"/>
  <!-- collapse -->
  <rect x="206.5" y="11.3" width="9.5" height="9.5" fill="none" stroke="#dcdcdc" stroke-width="1.2"/>
  <path d="M208.5 16 L214 12.8 L214 19.2 Z" fill="#dcdcdc"/>
</svg>
<!-- brush name -->
<div class="a" style="left:953px;top:110px;width:219px;height:23px;background:#262626;border-radius:5px;"></div>
<div class="t lbl" style="left:962px;top:116px;color:#dcdcdc;letter-spacing:-0.4px;">2. Hardness 050</div>
<!-- preview -->
<div class="a" style="left:953px;top:135px;width:219px;height:145px;background:#fff;"></div>
<div class="a" style="left:1038px;top:182.5px;width:50px;height:50px;border-radius:50%;background:radial-gradient(circle closest-side, #000 0px, #080808 2.5px, #282828 5.5px, #555 8.5px, #8c8c8c 11.5px, #b4b4b4 13.5px, #d4d4d4 15.5px, #ebebeb 17.5px, #f9f9f9 20.5px, #fff 24px);"></div>
<svg class="a" style="left:1165px;top:273px" width="7" height="7"><path d="M7 0 L7 7 L0 7 Z" fill="#7c94f2"/></svg>
<!-- shape -->
<div class="t" style="left:953px;top:289px;font-size:11.5px;color:#8e8e8e;">Shape:</div>
<div class="a" style="left:990px;top:282px;width:30px;height:26px;background:#1e1e1e;border-radius:5px;"></div>
<div class="a" style="left:999px;top:289px;width:12px;height:12px;border-radius:50%;background:#6a6a6a;"></div>
<div class="a" style="left:1029px;top:289px;width:12px;height:12px;background:#666;"></div>
<svg class="a" style="left:1057px;top:287px" width="16" height="16"><path d="M8 1 L15 8 L8 15 L1 8 Z" fill="#666"/></svg>
<!-- rows right -->
<div class="a" style="left:953px;top:310px;width:219px;height:26px;background:#383838;border:1px solid #1f1f1f;border-radius:5px;overflow:hidden;">
  <div class="a" style="left:0;top:0;width:176px;height:24px;background:#262626;"></div>
  <div class="a" style="left:0;top:0;width:14px;height:24px;background:#676767;"></div>
  <div class="a" style="left:176px;top:0;width:1px;height:24px;background:#2a2a2a;"></div>
  <div class="a" style="left:197px;top:0;width:1px;height:24px;background:#2a2a2a;"></div>
</div>
<div class="t lbl" style="left:961px;top:318px;color:#dcdcdc;">Radius</div>
<div class="t lbl" style="left:1081px;width:40px;text-align:right;top:318px;color:#dcdcdc;">25,0</div>
<div class="a" style="left:1133px;top:321.5px;width:14px;height:2.4px;background:#686868;"></div>
<div class="a" style="left:1154px;top:321.5px;width:14px;height:2.4px;background:#686868;"></div>
<div class="a" style="left:1159.8px;top:315.7px;width:2.4px;height:14px;background:#686868;"></div>
<div class="a" style="left:953px;top:338px;width:219px;height:26px;background:#383838;border:1px solid #1f1f1f;border-radius:5px;overflow:hidden;">
  <div class="a" style="left:0;top:0;width:176px;height:24px;background:#262626;"></div>
  <div class="a" style="left:0;top:0;width:13px;height:24px;background:#676767;"></div>
  <div class="a" style="left:176px;top:0;width:1px;height:24px;background:#2a2a2a;"></div>
  <div class="a" style="left:197px;top:0;width:1px;height:24px;background:#2a2a2a;"></div>
</div>
<div class="t lbl" style="left:961px;top:345px;color:#dcdcdc;">Spikes</div>
<div class="t lbl" style="left:1081px;width:40px;text-align:right;top:346px;color:#dcdcdc;">2</div>
<div class="a" style="left:1133px;top:349.5px;width:14px;height:2.4px;background:#686868;"></div>
<div class="a" style="left:1154px;top:349.5px;width:14px;height:2.4px;background:#686868;"></div>
<div class="a" style="left:1159.8px;top:343.7px;width:2.4px;height:14px;background:#686868;"></div>
<div class="a" style="left:953px;top:366px;width:219px;height:26px;background:#383838;border:1px solid #1f1f1f;border-radius:5px;overflow:hidden;">
  <div class="a" style="left:0;top:0;width:176px;height:24px;background:#262626;"></div>
  <div class="a" style="left:0;top:0;width:94px;height:24px;background:#676767;"></div>
  <div class="a" style="left:176px;top:0;width:1px;height:24px;background:#2a2a2a;"></div>
  <div class="a" style="left:197px;top:0;width:1px;height:24px;background:#2a2a2a;"></div>
</div>
<div class="t lbl" style="left:961px;top:374px;color:#dcdcdc;">Hardness</div>
<div class="t lbl" style="left:1081px;width:40px;text-align:right;top:374px;color:#dcdcdc;">0,50</div>
<div class="a" style="left:1133px;top:377.5px;width:14px;height:2.4px;background:#686868;"></div>
<div class="a" style="left:1154px;top:377.5px;width:14px;height:2.4px;background:#686868;"></div>
<div class="a" style="left:1159.8px;top:371.7px;width:2.4px;height:14px;background:#686868;"></div>
<div class="a" style="left:953px;top:394px;width:219px;height:26px;background:#383838;border:1px solid #1f1f1f;border-radius:5px;overflow:hidden;">
  <div class="a" style="left:0;top:0;width:176px;height:24px;background:#262626;"></div>
  <div class="a" style="left:0;top:0;width:13px;height:24px;background:#676767;"></div>
  <div class="a" style="left:176px;top:0;width:1px;height:24px;background:#2a2a2a;"></div>
  <div class="a" style="left:197px;top:0;width:1px;height:24px;background:#2a2a2a;"></div>
</div>
<div class="t lbl" style="left:961px;top:401px;color:#dcdcdc;">Aspect ratio</div>
<div class="t lbl" style="left:1081px;width:40px;text-align:right;top:402px;color:#dcdcdc;">1,0</div>
<div class="a" style="left:1133px;top:405.5px;width:14px;height:2.4px;background:#686868;"></div>
<div class="a" style="left:1154px;top:405.5px;width:14px;height:2.4px;background:#686868;"></div>
<div class="a" style="left:1159.8px;top:399.7px;width:2.4px;height:14px;background:#686868;"></div>
<div class="a" style="left:953px;top:422px;width:219px;height:26px;background:#383838;border:1px solid #1f1f1f;border-radius:5px;overflow:hidden;">
  <div class="a" style="left:0;top:0;width:176px;height:24px;background:#262626;"></div>
  <div class="a" style="left:0;top:0;width:13px;height:24px;background:#676767;"></div>
  <div class="a" style="left:176px;top:0;width:1px;height:24px;background:#2a2a2a;"></div>
  <div class="a" style="left:197px;top:0;width:1px;height:24px;background:#2a2a2a;"></div>
</div>
<div class="t lbl" style="left:961px;top:430px;color:#dcdcdc;">Angle</div>
<div class="t lbl" style="left:1081px;width:40px;text-align:right;top:430px;color:#dcdcdc;">0,0</div>
<div class="a" style="left:1133px;top:433.5px;width:14px;height:2.4px;background:#686868;"></div>
<div class="a" style="left:1154px;top:433.5px;width:14px;height:2.4px;background:#686868;"></div>
<div class="a" style="left:1159.8px;top:427.7px;width:2.4px;height:14px;background:#686868;"></div>
<div class="a" style="left:953px;top:450px;width:219px;height:26px;background:#383838;border:1px solid #1f1f1f;border-radius:5px;overflow:hidden;">
  <div class="a" style="left:0;top:0;width:176px;height:24px;background:#262626;"></div>
  <div class="a" style="left:0;top:0;width:20px;height:24px;background:#676767;"></div>
  <div class="a" style="left:176px;top:0;width:1px;height:24px;background:#2a2a2a;"></div>
  <div class="a" style="left:197px;top:0;width:1px;height:24px;background:#2a2a2a;"></div>
</div>
<div class="t lbl" style="left:961px;top:458px;color:#dcdcdc;">Spacing</div>
<div class="t lbl" style="left:1081px;width:40px;text-align:right;top:458px;color:#dcdcdc;">10,0</div>
<div class="a" style="left:1133px;top:461.5px;width:14px;height:2.4px;background:#686868;"></div>
<div class="a" style="left:1154px;top:461.5px;width:14px;height:2.4px;background:#686868;"></div>
<div class="a" style="left:1159.8px;top:455.7px;width:2.4px;height:14px;background:#686868;"></div>
<div class="a" style="left:951px;top:478px;width:222px;height:1px;background:#2a2a2a;"></div>
<svg class="a" style="left:1054px;top:478px" width="18" height="7"><circle cx="3" cy="3.5" r="1.7" fill="#aaa"/><circle cx="9" cy="3.5" r="1.7" fill="#aaa"/><circle cx="15" cy="3.5" r="1.7" fill="#aaa"/></svg>
<!-- layer tabs -->
<div class="a" style="left:951px;top:518px;width:222px;height:1px;background:#262626;"></div>
<div class="a" style="left:957px;top:485px;width:34px;height:33px;background:#1f1f1f;"></div>
<div class="a" style="left:958px;top:514px;width:32px;height:4px;background:#4a4a4a;"></div>
<div class="a" style="left:995px;top:485px;width:34px;height:33px;border:1px solid #2c2c2c;border-bottom:none;"></div>
<div class="a" style="left:1033px;top:485px;width:34px;height:33px;border:1px solid #2c2c2c;border-bottom:none;"></div>
<svg class="a" style="left:951px;top:485px" width="222" height="34" viewBox="0 0 222 34">
  <path d="M17 9 L31 9 L28.5 12.5 L14.5 12.5 Z M17 14.5 L31 14.5 L28.5 18 L14.5 18 Z M17 20 L31 20 L28.5 24 L14.5 24 Z" fill="#e8e8e8"/>
  <rect x="53.5" y="9.5" width="15" height="15" fill="none" stroke="#dcdcdc" stroke-width="1.4"/>
  <rect x="57" y="12" width="2" height="10" fill="#8a8a8a"/>
  <rect x="60.5" y="12" width="2" height="10" fill="#bbb"/>
  <rect x="64" y="12" width="2" height="10" fill="#dcdcdc"/>
  <path d="M93 22.5 C93 17.5 97 14.5 99.5 14.5 C102 14.5 106 17.5 106 22.5" fill="none" stroke="#e0e0e0" stroke-width="2.2"/>
  <rect x="90.5" y="12" width="4" height="3" fill="#e0e0e0"/><rect x="104.5" y="12" width="4" height="3" fill="#e0e0e0"/>
  <path d="M94 13.5 H105" stroke="#e0e0e0" stroke-width="1.2"/>
  <rect x="206.5" y="11" width="9.5" height="9.5" fill="none" stroke="#dcdcdc" stroke-width="1.2"/>
  <path d="M208.5 15.8 L214 12.6 L214 19 Z" fill="#dcdcdc"/>
</svg>
<!-- layer mode -->
<div class="a" style="left:953px;top:521px;width:179px;height:26px;background:#2b2b2b;border:1px solid #1f1f1f;border-radius:5px;"></div>
<div class="t lbl" style="left:959px;top:528px;color:#b8b8b8;">Mode</div>
<div class="t lbl" style="left:1068px;top:528px;color:#b8b8b8;">Normal</div>
<svg class="a" style="left:1115px;top:530px" width="12" height="9"><path d="M1 1.5 L5.5 6.5 L10 1.5" fill="none" stroke="#b8b8b8" stroke-width="1.6"/></svg>
<div class="a" style="left:1134px;top:521px;width:38px;height:26px;background:#2b2b2b;border:1px solid #1f1f1f;border-radius:5px;"></div>
<svg class="a" style="left:1137px;top:527px" width="32" height="16" viewBox="0 0 32 16">
  <path d="M3.4 5.7 A5.3 5.3 0 1 1 8.2 11" fill="none" stroke="#b8b8b8" stroke-width="1.8"/>
  <path d="M0 4.3 L7.8 4.3 L4.1 7.9 Z" fill="#b8b8b8"/>
  <circle cx="4.5" cy="11.4" r="2.4" fill="#b8b8b8"/>
  <path d="M19.4 4.6 L23.9 9.3 L28.5 4.6" fill="none" stroke="#b8b8b8" stroke-width="1.8"/>
</svg>
<!-- layer opacity -->
<div class="a" style="left:953px;top:549px;width:219px;height:26px;background:#383838;border:1px solid #2a2a2a;border-radius:5px;overflow:hidden;">
  <div class="a" style="left:0;top:0;width:176px;height:24px;background:#676767;"></div>
  <div class="a" style="left:176px;top:0;width:1px;height:24px;background:#2a2a2a;"></div>
  <div class="a" style="left:197px;top:0;width:1px;height:24px;background:#2a2a2a;"></div>
</div>
<div class="t lbl" style="left:961px;top:556px;color:#dcdcdc;">Opacity</div>
<div class="t lbl" style="left:1081px;width:40px;text-align:right;top:556px;color:#dcdcdc;">100,0</div>
<div class="a" style="left:1133px;top:561px;width:14px;height:2px;background:#5e5e5e;"></div>
<div class="a" style="left:1154px;top:561px;width:14px;height:2px;background:#5e5e5e;"></div>
<div class="a" style="left:1160px;top:555px;width:2px;height:14px;background:#5e5e5e;"></div>
<!-- layers list -->
<div class="a" style="left:953px;top:577px;width:219px;height:114px;background:#262626;border:1px solid #1e1e1e;"></div>
<div class="a" style="left:954px;top:578px;width:217px;height:38px;background:#3b3b3b;"></div>
<div class="a" style="left:954px;top:578px;width:217px;height:1px;background:#474747;"></div>
<div class="a" style="left:954px;top:615px;width:217px;height:1px;background:#474747;"></div>
<div class="a" style="left:954px;top:578px;width:1px;height:38px;background:#474747;"></div>
<div class="a" style="left:984px;top:578px;width:1px;height:38px;background:#474747;"></div>
<div class="a" style="left:1014px;top:578px;width:1px;height:38px;background:#474747;"></div>
<div class="a" style="left:1044px;top:578px;width:1px;height:38px;background:#474747;"></div>
<svg class="a" style="left:953px;top:577px" width="219" height="40" viewBox="0 0 219 40">
  <path d="M8.2 20 C10.5 16.6 13.5 15 16.1 15 C18.7 15 21.7 16.6 24 20 C21.7 23.4 18.7 25 16.1 25 C13.5 25 10.5 23.4 8.2 20 Z" fill="#dcdcdc"/>
  <circle cx="16.1" cy="19.8" r="3.4" fill="#3b3b3b"/>
  <circle cx="15.2" cy="18.6" r="1.1" fill="#dcdcdc"/>
  <path d="M43 18.5 V16.3 C43 12.6 49 12.6 49 16.3 V18.5" fill="none" stroke="#dcdcdc" stroke-width="2.2"/>
  <rect x="39.7" y="18.3" width="12.5" height="7.9" fill="#dcdcdc"/>
  <path d="M75.2 15.6 C74.4 14.6 72.4 14.8 71.9 16.8 L69.7 24.2 C69.2 26 67.8 26.2 67 25.4" fill="none" stroke="#dcdcdc" stroke-width="2"/>
  <path d="M68.8 18.6 H73.6" stroke="#dcdcdc" stroke-width="1.6"/>
  <path d="M77.2 19.2 L82.4 24.6 M82.4 19.2 L77.2 24.6" stroke="#dcdcdc" stroke-width="2"/>
  <circle cx="198" cy="18.3" r="5.4" fill="none" stroke="#e0e0e0" stroke-width="1.8"/>
  <path d="M202 22.5 L206 26.5" stroke="#e0e0e0" stroke-width="2" stroke-linecap="round"/>
</svg>
<!-- bottom buttons (disabled) -->
<svg class="a" style="left:951px;top:693px" width="222" height="24" viewBox="0 0 222 24">
  <g fill="none" stroke="#6a6a6a">
    <path d="M14 5.8 H17.5 L20.3 8.6 V20.2 H9.8 V13.5" stroke-width="1.6"/>
    <path d="M10.8 5 V13 M6.8 9 H14.8" stroke-width="2"/>
    <path d="M64 16.5 L70.7 9.5 L77.4 16.5" stroke-width="2.4"/>
    <path d="M92 9.5 L98.7 16.5 L105.4 9.5" stroke-width="2.4"/>
    <path d="M120.5 7.2 H128.6 V14.6 H120.5 Z" stroke-width="1.4"/>
    <path d="M130.6 10.8 H133.4 V18.6 H124.8 V16.4" stroke-width="1.4"/>
    <path d="M160 5 V15.5 M156.8 12.6 L160 16 L163.2 12.6" stroke-width="1.6"/>
  </g>
  <g fill="#6a6a6a">
    <path d="M34.6 5 H41 L42.5 7 H50.8 V21 H34.6 Z"/>
    <path d="M148 6 H155.5 L153.5 8.6 H145.8 Z M148 9.8 H155.5 L153.5 12.4 H145.8 Z M148 13.6 H155.5 L153.5 16.2 H145.8 Z"/>
    <path d="M178.5 5 H187 V10 C187 12.6 185 13.5 182.8 13.5 C180.5 13.5 178.5 12.6 178.5 10 Z"/>
    <path d="M176.5 13.5 H190 L186.6 19.6 H173 Z"/>
    <rect x="200" y="5.3" width="16" height="15.7" rx="2"/>
  </g>
  <path d="M42.7 11.5 V19 M39 15.2 H46.4" stroke="#3b3b3b" stroke-width="2.2"/>
  <path d="M180.6 8 H181.8 M184 8 H185.2 M180.6 10.3 C181.8 11.6 183.6 11.6 185 10.3" stroke="#3b3b3b" stroke-width="1"/>
  <path d="M203.2 8.6 L212.8 17.8 M212.8 8.6 L203.2 17.8" stroke="#3b3b3b" stroke-width="2.6"/>
</svg>

<!-- desktop icon -->
<div class="a" style="left:1252px;top:109px;width:45px;height:36px;background:#fcfcfc;"></div>
<svg class="a" style="left:1252px;top:109px" width="45" height="36" viewBox="0 0 45 36">
  <g fill="none" stroke="#cdcdcd" stroke-width="0.7">
    <path d="M4 34 V14 C4 6 8 3 14 3 H42"/>
    <path d="M4 10 H42 M2 29.5 H44 M1 34.5 H42"/>
    <path d="M16.2 10 V34 M29.6 10 V34 M39.7 3 V34"/>
    <rect x="16.2" y="26" width="13.4" height="5" stroke="#9a9a9a"/>
    <path d="M16.2 21 H29.6"/>
  </g>
  <g fill="#999">
    <rect x="3" y="9" width="2" height="2"/><rect x="15.2" y="9" width="2" height="2"/><rect x="28.6" y="9" width="2" height="2"/><rect x="38.7" y="9" width="2" height="2"/>
    <rect x="3" y="28.5" width="2" height="2"/><rect x="38.7" y="28.5" width="2" height="2"/>
    <rect x="22" y="12" width="1.5" height="1.5"/><rect x="9" y="19" width="1.5" height="1.5"/><rect x="33" y="22" width="1.5" height="1.5"/>
  </g>
  <rect x="17" y="31" width="12" height="3" fill="#e4e4e4"/>
  <circle cx="35" cy="8" r="1.6" fill="none" stroke="#f08080" stroke-width="0.7"/>
  <rect x="43" y="13" width="1" height="6" fill="#aaa"/>
</svg>
<div class="t" style="left:1243px;top:153px;font-size:12px;color:#fff;letter-spacing:-0.2px;">Firefox_Scr...</div>

<!-- menu bottom line -->
<div class="a" style="left:13px;top:73px;width:1161px;height:1px;background:#1c1c1c;"></div>
<!-- title bar controls -->
<svg class="a" style="left:1040px;top:18px" width="135" height="31" viewBox="0 0 135 31">
  <path d="M15 15.5 H25" stroke="#a8a8a8" stroke-width="1"/>
  <rect x="60.5" y="10.5" width="9" height="9" fill="none" stroke="#a8a8a8" stroke-width="1"/>
  <path d="M106 10 L116 20 M116 10 L106 20" stroke="#a8a8a8" stroke-width="1"/>
</svg>
<!-- gimp icon -->
<svg class="a" style="left:18px;top:23px" width="22" height="20" viewBox="0 0 22 20">
  <path d="M5 13.5 C4.3 11 4.8 8 6.3 5.3 L7.6 7.2 C10.5 6.3 13.5 5.6 15.5 4.6 C17 3.8 18.3 3.2 19.2 2.6 L19.2 12.5 C19.1 14.6 17.6 15.8 15.3 15.8 L8.5 15.6 C6.5 15.4 5.5 14.8 5 13.5 Z" fill="#978d80"/>
  <circle cx="8.7" cy="9.3" r="2.3" fill="#fff"/><circle cx="12.7" cy="9.3" r="2.3" fill="#fff"/>
  <circle cx="9.2" cy="9.7" r="1.2" fill="#000"/><circle cx="13.3" cy="9.8" r="1.3" fill="#000"/>
  <circle cx="4.5" cy="9.3" r="2" fill="#000"/><circle cx="4.4" cy="8.5" r="0.8" fill="#fff"/>
  <path d="M13.5 12.8 L16.5 13.6 L16 15 L13.3 14.2 Z" fill="#e0862a"/>
  <path d="M18 15.5 L19.3 15.5 L19 17 L18.2 17 Z" fill="#111"/>
</svg>
<!-- separator grips -->
<svg class="a" style="left:202px;top:390px" width="5" height="16"><circle cx="2.5" cy="2.4" r="1.5" fill="#c4c4c4"/><circle cx="2.5" cy="7.5" r="1.5" fill="#c4c4c4"/><circle cx="2.5" cy="12.5" r="1.5" fill="#c4c4c4"/></svg>
<svg class="a" style="left:945px;top:390px" width="5" height="16"><circle cx="2.5" cy="2.4" r="1.5" fill="#c4c4c4"/><circle cx="2.5" cy="7.5" r="1.5" fill="#c4c4c4"/><circle cx="2.5" cy="12.5" r="1.5" fill="#c4c4c4"/></svg>
<!-- red annotation -->
<svg class="a" style="left:0;top:0" width="1326" height="732" viewBox="0 0 1326 732">
  <g fill="none" stroke="#ff0000" stroke-width="4" stroke-linejoin="round" stroke-linecap="butt" transform="translate(0 0.3)">
    <polyline points="1262.5,123.8 1246.8,123.8 1227.5,121.4 1203.4,116.5 1172,113.4 1147.9,111.2 1126,105.7 1111.7,103.5 960,103.5 922.6,104.1 912.3,104.9 891.8,111 863.6,114.9 855.6,115.6 834.5,118.7 816.4,126.2 798.6,130.6 780.2,135.2 765.1,143.3 747,150.3 718.4,160.9 701.8,171.4 680.7,180.5 662.9,190.9 646.5,200.2 630.1,212.8 613.7,225.9 595.1,240.7 581,258.2 561.5,284 539.3,314.2"/>
    <polyline points="542,265.3 537.5,314.2 531.3,326.6 525.1,332.3 607.7,332.3"/>
  </g>
  <text x="425.3" y="395" font-family="Liberation Sans" font-size="36.4" fill="#ff0000">causing crash</text>
</svg>

</body></html>
